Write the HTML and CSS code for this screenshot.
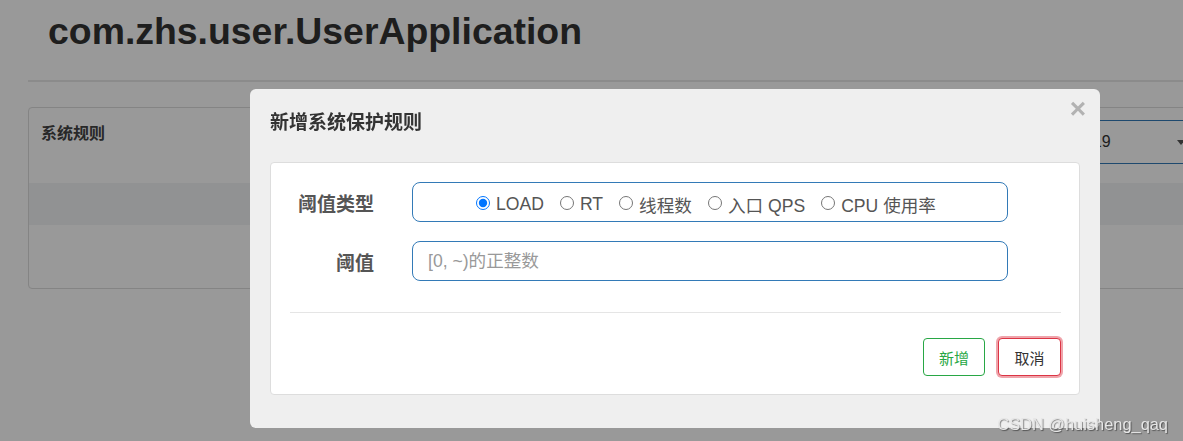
FILE: index.html
```html
<!DOCTYPE html>
<html lang="zh-CN">
<head>
<meta charset="utf-8">
<title>com.zhs.user.UserApplication</title>
<link rel="stylesheet" href="styles.css">
</head>
<body>
<div class="page">
  <header class="app-header">
    <h1 class="app-title">com.zhs.user.UserApplication</h1>
  </header>
  <section class="card">
    <div class="card-head">
      <span class="card-title">系统规则</span>
      <div class="machine-select">
        <span class="machine-text">192.168.1.6:8719</span>
        <span class="caret"></span>
      </div>
    </div>
    <div class="table-head"></div>
    <div class="table-row"></div>
  </section>
</div>

<div class="overlay"></div>

<div class="modal">
  <div class="modal-header">
    <h2 class="modal-title">新增系统保护规则</h2>
    <span class="modal-close">×</span>
  </div>
  <div class="modal-panel">
    <div class="form-row">
      <label class="form-label">阈值类型</label>
      <div class="radio-box">
        <label class="radio-item"><input type="radio" name="grade" checked><span>LOAD</span></label>
        <label class="radio-item"><input type="radio" name="grade"><span>RT</span></label>
        <label class="radio-item"><input type="radio" name="grade"><span>线程数</span></label>
        <label class="radio-item"><input type="radio" name="grade"><span>入口 QPS</span></label>
        <label class="radio-item"><input type="radio" name="grade"><span>CPU 使用率</span></label>
      </div>
    </div>
    <div class="form-row form-row-second">
      <label class="form-label">阈值</label>
      <input class="text-input" type="text" placeholder="[0, ~)的正整数">
    </div>
    <div class="separator"></div>
    <div class="actions">
      <button class="btn btn-add">新增</button>
      <button class="btn btn-cancel">取消</button>
    </div>
  </div>
</div>

<div class="watermark">CSDN @huisheng_qaq</div>
</body>
</html>
```

FILE: styles.css
```css
* { box-sizing: border-box; }

html, body {
  margin: 0;
  padding: 0;
  height: 100%;
  overflow: hidden;
  background: #ffffff;
  font-family: "Liberation Sans", "Noto Sans CJK SC", Arial, sans-serif;
}

.page {
  padding: 0 0 0 28px;
  width: 1260px;
}

.app-header {
  height: 82px;
  border-bottom: 2px solid #e8e8e8;
  padding: 10px 0 0 20px;
}

.app-title {
  margin: 0;
  font-size: 37.4px;
  line-height: 42px;
  font-weight: bold;
  color: #333333;
}

.card {
  margin-top: 25px;
  width: 1184px;
  border: 1px solid #dcdcdc;
  border-radius: 4px;
}

.card-head {
  height: 75px;
  display: flex;
  justify-content: space-between;
  align-items: flex-start;
  padding: 12px 0 0 12px;
}

.card-title {
  font-family: "Noto Sans CJK SC", sans-serif;
  font-size: 16px;
  line-height: 24px;
  font-weight: bold;
  color: #444444;
}

.machine-select {
  width: 238px;
  height: 44px;
  border: 1px solid #337ab7;
  border-radius: 4px;
  display: flex;
  align-items: center;
  padding: 0 0 0 12px;
  font-size: 16px;
  color: #333333;
}

.caret {
  margin-left: auto;
  margin-right: 25px;
  width: 0;
  height: 0;
  border-left: 4px solid transparent;
  border-right: 4px solid transparent;
  border-top: 5px solid #555555;
}

.table-head {
  height: 42px;
  background: #f2f3f5;
}

.table-row {
  height: 63px;
}

.overlay {
  position: fixed;
  inset: 0;
  background: rgba(0, 0, 0, 0.4);
}

.modal {
  position: fixed;
  top: 89px;
  left: 250px;
  width: 850px;
  background: #efefef;
  border-radius: 6px;
  padding: 0 20px 33px;
}

.modal-header {
  position: relative;
  height: 73px;
  padding-top: 19px;
}

.modal-title {
  margin: 0;
  font-family: "Noto Sans CJK SC", sans-serif;
  font-size: 19px;
  line-height: 26px;
  font-weight: bold;
  color: #333333;
}

.modal-close {
  position: absolute;
  top: 4px;
  right: -6px;
  font-family: "Liberation Sans", sans-serif;
  font-size: 28px;
  line-height: 32px;
  font-weight: bold;
  color: #b2b2b2;
}

.modal-panel {
  background: #ffffff;
  border: 1px solid #dddddd;
  border-radius: 4px;
  padding: 19px 18px 18px 19px;
}

.form-row {
  display: flex;
  align-items: center;
}

.form-row-second {
  margin-top: 19px;
}

.form-label {
  width: 84px;
  margin-right: 38px;
  text-align: right;
  font-family: "Noto Sans CJK SC", sans-serif;
  font-size: 19px;
  font-weight: bold;
  color: #555555;
}

.radio-box {
  width: 596px;
  height: 40px;
  border: 1px solid #337ab7;
  border-radius: 8px;
  display: flex;
  align-items: center;
  justify-content: center;
  gap: 16px;
  padding: 5px 8px 0 0;
}

.radio-item {
  display: flex;
  align-items: center;
  font-family: "Liberation Sans", "Noto Sans CJK SC", sans-serif;
  font-size: 17.6px;
  color: #555555;
}

.radio-item input {
  width: 14px;
  height: 14px;
  margin: -3px 6px 0 0;
}

.text-input {
  width: 596px;
  height: 40px;
  border: 1px solid #337ab7;
  border-radius: 8px;
  padding: 0 15px;
  font-family: "Liberation Sans", "Noto Sans CJK SC", sans-serif;
  font-size: 17.6px;
  color: #555555;
  background: #ffffff;
  outline: none;
}

.text-input::placeholder {
  color: #999999;
}

.separator {
  margin-top: 31px;
  height: 1px;
  background: #e5e5e5;
}

.actions {
  margin-top: 25px;
  display: flex;
  justify-content: flex-end;
  gap: 13px;
}

.btn {
  height: 38px;
  border-radius: 4px;
  background: #ffffff;
  font-family: "Noto Sans CJK SC", sans-serif;
  font-size: 15px;
  padding: 0;
  cursor: pointer;
}

.btn-add {
  width: 62px;
  border: 1px solid #28a745;
  color: #28a745;
}

.btn-cancel {
  width: 63px;
  border: 1px solid #dc3545;
  color: #333333;
  box-shadow: 0 0 0 2px rgba(220, 53, 69, 0.45);
}

.watermark {
  position: fixed;
  right: 15px;
  bottom: 7px;
  font-family: "Liberation Sans", sans-serif;
  font-size: 16.4px;
  color: #e6e6e6;
  text-shadow: 1px 1px 1px rgba(0, 0, 0, 0.45);
}
```
